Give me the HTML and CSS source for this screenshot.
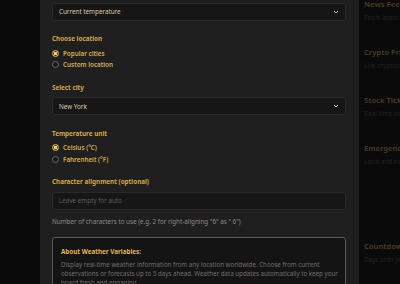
FILE: index.html
```html
<!DOCTYPE html>
<html lang="en">
<head>
    <meta charset="UTF-8">
    <meta name="viewport" content="width=device-width, initial-scale=1.0">
    <title>Weather widget settings</title>
    <link rel="stylesheet" href="styles.css">
</head>
<body>
    <div class="page">
        <div class="shade-left"></div>
        <section class="modal">
            <div class="field">
                <div class="select">
                    <span>Current temperature</span>
                    <svg class="chevron" viewBox="0 0 6 4"><path d="M1 1l2 2 2-2" /></svg>
                </div>
            </div>
            <div class="field">
                <div class="label">Choose location</div>
                <div class="radios">
                    <div class="radio checked"><span class="dot"></span>Popular cities</div>
                    <div class="radio"><span class="dot"></span>Custom location</div>
                </div>
            </div>
            <div class="field">
                <div class="label">Select city</div>
                <div class="select">
                    <span>New York</span>
                    <svg class="chevron" viewBox="0 0 6 4"><path d="M1 1l2 2 2-2" /></svg>
                </div>
            </div>
            <div class="field">
                <div class="label">Temperature unit</div>
                <div class="radios">
                    <div class="radio checked"><span class="dot"></span>Celsius (°C)</div>
                    <div class="radio"><span class="dot"></span>Fahrenheit (°F)</div>
                </div>
            </div>
            <div class="field">
                <div class="label">Character alignment (optional)</div>
                <div class="input">Leave empty for auto</div>
                <div class="help">Number of characters to use (e.g. 2 for right-aligning "6" as " 6")</div>
            </div>
            <div class="info">
                <div class="info-title">About Weather Variables:</div>
                <p>Display real-time weather information from any location worldwide. Choose from current observations or forecasts up to 5 days ahead. Weather data updates automatically to keep your board fresh and engaging.</p>
            </div>
        </section>
        <aside class="widgets">
            <div class="card">
                <div class="card-title">News Feed</div>
                <div class="card-text">Fetch latest headlines</div>
            </div>
            <div class="card">
                <div class="card-title">Crypto Prices</div>
                <div class="card-text">Live cryptocurrency rates</div>
            </div>
            <div class="card">
                <div class="card-title">Stock Ticker</div>
                <div class="card-text">Real-time stock quotes</div>
            </div>
            <div class="card tall">
                <div class="card-title">Emergency Alerts</div>
                <div class="card-text">Local and national warnings</div>
            </div>
            <div class="card">
                <div class="card-title">Countdown</div>
                <div class="card-text">Days until your next event</div>
            </div>
        </aside>
    </div>
</body>
</html>
```

FILE: styles.css
```css
body {
    margin: 0;
    padding: 0;
    background: #0a0a0a;
    font-family: 'Noto Sans', 'Open Sans', sans-serif;
    font-size: 6.3px;
    overflow: hidden;
}
.page {
    display: flex;
    height: 284px;
    overflow: hidden;
}
.shade-left {
    width: 40px;
    flex: none;
    background: #0a0a0a;
}
.modal {
    width: 319px;
    flex: none;
    box-sizing: border-box;
    padding: 2.5px 13px 0 12px;
    background: #1f1f1f;
    overflow: hidden;
}
.field {
    margin-bottom: 13.5px;
}
.label {
    color: #d4a648;
    font-weight: 700;
    line-height: 9px;
    margin-bottom: 5.5px;
}
.select,
.input {
    height: 18px;
    box-sizing: border-box;
    display: flex;
    align-items: center;
    justify-content: space-between;
    padding: 0 6px 0 6px;
    background: #161616;
    border: 1px solid #2a2a2a;
    border-radius: 3px;
    color: #dcc9a2;
}
.input {
    color: #5c5c5c;
}
.chevron {
    width: 6px;
    height: 4px;
    fill: none;
    stroke: #bdbdbd;
    stroke-width: 1;
}
.radios {
    display: flex;
    flex-direction: column;
    gap: 2.5px;
}
.radio {
    display: flex;
    align-items: center;
    gap: 4px;
    line-height: 9px;
    color: #d9ad4e;
    font-weight: 600;
}
.dot {
    width: 7px;
    height: 7px;
    box-sizing: border-box;
    border: 1px solid #6a6a6a;
    border-radius: 50%;
    background: #1a1a1a;
}
.radio.checked .dot {
    border: 1px solid #e0b64f;
    background: radial-gradient(circle, #f0d070 0 1.6px, #3a2f18 1.9px 2.2px, #e0b64f 2.4px);
}
.help {
    margin-top: 7px;
    line-height: 9px;
    color: #8a8a8a;
}
.info {
    margin-top: -2.5px;
    padding: 9px 4px 0 8px;
    border: 1.5px solid #5c5c5c;
    border-radius: 3px;
    background: #141414;
}
.info-title {
    color: #e2b453;
    font-weight: 700;
    line-height: 9px;
    margin-bottom: 4px;
}
.info p {
    margin: 0;
    color: #6e6e6e;
    font-size: 6.2px;
    line-height: 9px;
}
.widgets {
    flex: 1;
    padding-left: 5px;
    white-space: nowrap;
    overflow: hidden;
}
.card {
    height: 48.5px;
}
.card.tall {
    height: 98.5px;
}
.card-title {
    color: #44381f;
    font-weight: 700;
    font-size: 7.5px;
    line-height: 9px;
    margin-top: -0.5px;
}
.card-text {
    color: #222222;
    margin-top: 4px;
    line-height: 9px;
}
```
